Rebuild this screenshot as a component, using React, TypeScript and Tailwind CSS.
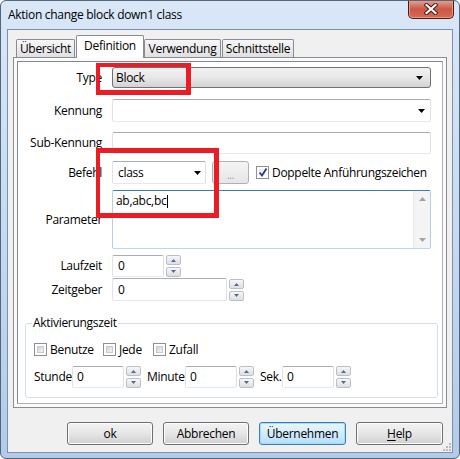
import React from 'react';

const tb =
  'bg-white border border-[#abadb3] border-l-[#e2e3ea] border-r-[#dbdfe6] border-b-[#e3e9ef] rounded-[2px]';

const ComboArrow = () => (
  <svg width="7" height="4" viewBox="0 0 7 4">
    <path d="M0 0 L7 0 L3.5 4 Z" fill="#000" />
  </svg>
);

const SpinArrow = ({ up }: { up?: boolean }) => (
  <svg width="7" height="4" viewBox="0 0 7 4">
    <path d={up ? 'M1 4 L3.5 1 L6 4 Z' : 'M1 0 L6 0 L3.5 3 Z'} fill="#56698f" />
  </svg>
);

const Spin = () => (
  <div className="flex flex-col justify-between w-[15px] h-[22px] shrink-0">
    <div className="h-[10px] flex items-center justify-center rounded-[2px] border border-[#bcc0c6] bg-gradient-to-b from-[#f7f7f7] to-[#dcdfe3]">
      <SpinArrow up />
    </div>
    <div className="h-[10px] flex items-center justify-center rounded-[2px] border border-[#bcc0c6] bg-gradient-to-b from-[#f7f7f7] to-[#dcdfe3]">
      <SpinArrow />
    </div>
  </div>
);

const Check = ({ checked }: { checked?: boolean }) => (
  <div className="w-[13px] h-[13px] shrink-0 border border-[#8e8f8f] bg-white p-[2px]">
    {checked ? (
      <div className="w-full h-full relative bg-gradient-to-br from-[#e6e9ee] to-[#fafafa]">
        <svg className="absolute -left-[1px] -top-[2px]" width="10" height="11" viewBox="0 0 10 11">
          <path d="M1.5 5.5 L4 8.5 L8.5 1.5" stroke="#2a3a8a" strokeWidth="1.8" fill="none" />
        </svg>
      </div>
    ) : (
      <div className="w-full h-full border border-[#c7cbd1] bg-gradient-to-br from-[#cfd2d7] to-[#f5f5f5]" />
    )}
  </div>
);

const Label = ({ children }: { children: React.ReactNode }) => (
  <div className="w-[84px] mr-[10px] text-right shrink-0">{children}</div>
);

const Tab = ({ label, active, className }: { label: string; active?: boolean; className: string }) =>
  active ? (
    <div
      className={`${className} relative z-10 h-[23px] -mb-[1px] bg-white border border-b-0 border-[#898c95] rounded-t-[2px] flex items-center justify-center pb-[2px]`}
    >
      {label}
    </div>
  ) : (
    <div
      className={`${className} h-[18px] bg-gradient-to-b from-[#f7f7f7] to-[#e0e0e0] border border-b-0 border-[#898c95] rounded-t-[2px] flex items-center justify-center`}
    >
      {label}
    </div>
  );

const Btn = ({ children, def, className }: { children: React.ReactNode; def?: boolean; className: string }) => (
  <div
    className={`${className} h-[23px] rounded-[3px] border flex items-center justify-center ${
      def
        ? 'border-[#3c7fb1] bg-gradient-to-b from-[#e9f6fd] via-[#d3ecfb] to-[#b4dff9] shadow-[inset_0_0_0_1px_#9fdcff]'
        : 'border-[#707070] bg-gradient-to-b from-[#f3f3f3] via-[#e6e6e6] to-[#d0d0d0] shadow-[inset_0_0_0_1px_#fcfcfc]'
    }`}
  >
    {children}
  </div>
);

export default function App() {
  return (
    <div className="w-[460px] h-[459px] relative overflow-hidden rounded-[6px] border border-[#52667e] bg-gradient-to-b from-[#d9e7f7] via-[#c6daf1] to-[#b3cbe8] text-[12px] leading-[16px] text-black font-['Open_Sans','Noto_Sans',sans-serif] flex flex-col">
      {/* title bar */}
      <div className="h-[28px] flex justify-between shrink-0">
        <div className="pl-[7px] pt-[6px] tracking-[-0.3px]">Aktion change block down1 class</div>
        <div className="-mt-[1px] mr-[5px] w-[46px] h-[19px] rounded-b-[5px] border border-t-0 border-[#4d1a12] bg-gradient-to-b from-[#e8a597] via-[#c95846] to-[#d96a50] shadow-[inset_0_0_0_1px_#e49a87] flex items-center justify-center">
          <svg width="14" height="12" viewBox="0 0 14 12">
            <path d="M2.5 2 L11.5 10 M11.5 2 L2.5 10" stroke="#4a1a14" strokeWidth="4.2" strokeLinecap="square" />
            <path d="M2.5 2 L11.5 10 M11.5 2 L2.5 10" stroke="#fff" strokeWidth="2.2" strokeLinecap="square" />
          </svg>
        </div>
      </div>

      {/* client area */}
      <div className="relative ml-[6px] w-[446px] h-[424px] border border-[#7d91a9] bg-[#f0f0f0] flex flex-col shrink-0">
        <div className="px-[5px] pt-[5px]">
          <div className="h-[22px] flex items-end tracking-[-0.3px]">
            <Tab label="Übersicht" className="ml-[3px] w-[59px]" />
            <Tab label="Definition" active className="ml-[1px] w-[68px]" />
            <Tab label="Verwendung" className="w-[77px]" />
            <Tab label="Schnittstelle" className="ml-[1px] w-[72px]" />
          </div>

          {/* tab page */}
          <div className="w-[434px] h-[351px] border border-[#898c95] bg-[#fafafa] p-[3px]">
            <div className="w-full h-full border border-[#828790] border-r-[#b0b0b0] border-b-[#b0b0b0] bg-white pt-[5px] tracking-[-0.3px]">
              {/* Type */}
              <div className="flex items-center h-[21px]">
                <Label>Type</Label>
                <div className="w-[319px] h-[21px] rounded-[3px] border border-[#707070] bg-gradient-to-b from-[#f2f2f2] via-[#e8e8e8] to-[#d3d3d3] flex items-center justify-between pl-[3px] pr-[7px]">
                  <span>Block</span>
                  <ComboArrow />
                </div>
              </div>

              {/* Kennung */}
              <div className="flex items-center h-[23px] mt-[11px]">
                <Label>Kennung</Label>
                <div className={`${tb} w-[319px] h-[23px] flex items-center justify-end pr-[5px]`}>
                  <ComboArrow />
                </div>
              </div>

              {/* Sub-Kennung */}
              <div className="flex items-center h-[22px] mt-[10px]">
                <Label>Sub-Kennung</Label>
                <div className={`${tb} w-[319px] h-[22px]`} />
              </div>

              {/* Befehl */}
              <div className="flex items-center h-[23px] mt-[7px]">
                <Label>Befehl</Label>
                <div className={`${tb} w-[94px] h-[23px] flex items-center justify-between pl-[5px] pr-[4px]`}>
                  <span>class</span>
                  <ComboArrow />
                </div>
                <div className="ml-[6px] w-[37px] h-[23px] rounded-[3px] border border-[#adb2b5] bg-gradient-to-b from-[#f4f4f4] to-[#e6e6e6] flex items-end justify-center pb-[3px] text-[#9a9a9a] text-[10px] leading-[10px]">
                  ...
                </div>
                <div className="ml-[7px]">
                  <Check checked />
                </div>
                <span className="ml-[3px]">Doppelte Anführungszeichen</span>
              </div>

              {/* Parameter */}
              <div className="flex items-center h-[59px] mt-[6px]">
                <Label>Parameter</Label>
                <div className="w-[319px] h-[59px] rounded-[2px] border border-[#3d7bad] border-l-[#b5cfe7] border-r-[#b5cfe7] border-b-[#b7d9ed] bg-white flex">
                  <div className="flex-1 pl-[3px] pt-[2px] flex items-start">
                    <span>ab,abc,bc</span>
                    <span className="mt-[2px] ml-[1px] w-[1px] h-[13px] bg-black" />
                  </div>
                  <div className="w-[17px] bg-[#f4f4f4] border-l border-[#ececec] flex flex-col items-center justify-between py-[6px]">
                    <svg width="7" height="4" viewBox="0 0 7 4">
                      <path d="M0 4 L3.5 0 L7 4 Z" fill="#a3a3a3" />
                    </svg>
                    <svg width="7" height="4" viewBox="0 0 7 4">
                      <path d="M0 0 L7 0 L3.5 4 Z" fill="#a3a3a3" />
                    </svg>
                  </div>
                </div>
              </div>

              {/* Laufzeit */}
              <div className="flex items-center h-[22px] mt-[6px]">
                <Label>Laufzeit</Label>
                <div className={`${tb} w-[52px] h-[22px] flex items-center pl-[5px]`}>0</div>
                <div className="ml-[2px]">
                  <Spin />
                </div>
              </div>

              {/* Zeitgeber */}
              <div className="flex items-center h-[23px] mt-[1px]">
                <Label>Zeitgeber</Label>
                <div className={`${tb} w-[115px] h-[23px] flex items-center pl-[5px]`}>0</div>
                <div className="ml-[2px]">
                  <Spin />
                </div>
              </div>

              {/* Aktivierungszeit */}
              <fieldset className="ml-[7px] mt-[14px] w-[413px] rounded-[3px] border border-[#d5dfe5] pl-[8px] pb-[9px]">
                <legend className="-ml-[2px] px-[1px] leading-[16px]">Aktivierungszeit</legend>
                <div className="flex items-center h-[13px] mt-[12px]">
                  <Check />
                  <span className="ml-[3px] w-[53px]">Benutze</span>
                  <Check />
                  <span className="ml-[3px] w-[34px]">Jede</span>
                  <Check />
                  <span className="ml-[3px]">Zufall</span>
                </div>
                <div className="flex items-center h-[22px] mt-[10px]">
                  <span className="w-[38px]">Stunde</span>
                  <div className={`${tb} w-[52px] h-[22px] flex items-center pl-[4px]`}>0</div>
                  <div className="ml-[2px]">
                    <Spin />
                  </div>
                  <span className="ml-[6px] w-[38px]">Minute</span>
                  <div className={`${tb} w-[52px] h-[22px] flex items-center pl-[4px]`}>0</div>
                  <div className="ml-[2px]">
                    <Spin />
                  </div>
                  <span className="ml-[6px] w-[22px]">Sek.</span>
                  <div className={`${tb} w-[52px] h-[22px] flex items-center pl-[4px]`}>0</div>
                  <div className="ml-[2px]">
                    <Spin />
                  </div>
                </div>
              </fieldset>
            </div>
          </div>
        </div>

        {/* buttons */}
        <div className="mt-[14px] pl-[59px] flex gap-[10px] tracking-[-0.3px]">
          <Btn className="w-[86px]">ok</Btn>
          <Btn className="w-[86px]">Abbrechen</Btn>
          <Btn def className="w-[87px]">Übernehmen</Btn>
          <Btn className="w-[87px]">
            <span>
              <span className="underline underline-offset-2">H</span>elp
            </span>
          </Btn>
        </div>

        {/* size grip */}
        <svg className="absolute right-[1px] bottom-[1px]" width="8" height="8" viewBox="0 0 8 8">
          {[
            [6, 0],
            [6, 3],
            [3, 3],
            [6, 6],
            [3, 6],
            [0, 6],
          ].map(([x, y], i) => (
            <rect key={i} x={x} y={y} width="2" height="2" fill="#b8bcc2" />
          ))}
        </svg>
      </div>

      {/* red highlight boxes */}
      <div className="absolute left-[95px] top-[62px] w-[95px] h-[32px] border-[4px] border-r-[5px] border-b-[5px] border-[#ec1c24]" />
      <div className="absolute left-[95px] top-[147px] w-[123px] h-[70px] border-[5px] border-l-[4px] border-[#ec1c24]" />
    </div>
  );
}
